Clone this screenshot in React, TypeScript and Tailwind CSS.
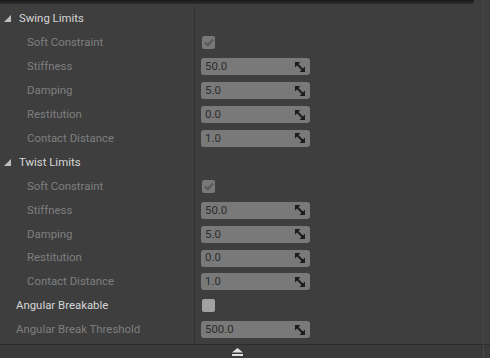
import React from "react";

type Row =
  | { kind: "header"; label: string }
  | { kind: "check"; label: string; indent: number; bright?: boolean; checked: boolean }
  | { kind: "num"; label: string; indent: number; value: string };

const group = (title: string): Row[] => [
  { kind: "header", label: title },
  { kind: "check", label: "Soft Constraint", indent: 27, checked: true },
  { kind: "num", label: "Stiffness", indent: 27, value: "50.0" },
  { kind: "num", label: "Damping", indent: 27, value: "5.0" },
  { kind: "num", label: "Restitution", indent: 27, value: "0.0" },
  { kind: "num", label: "Contact Distance", indent: 27, value: "1.0" },
];

const rows: Row[] = [
  ...group("Swing Limits"),
  ...group("Twist Limits"),
  { kind: "check", label: "Angular Breakable", indent: 16, bright: true, checked: false },
  { kind: "num", label: "Angular Break Threshold", indent: 16, value: "500.0" },
];

const DragIcon = () => (
  <svg width="10" height="10" viewBox="0 0 10 10" className="shrink-0">
    <polygon points="0,0 5.5,0 0,5.5" fill="#1c1c1c" />
    <polygon points="10,10 4.5,10 10,4.5" fill="#1c1c1c" />
    <line x1="2" y1="2" x2="8" y2="8" stroke="#1c1c1c" strokeWidth="2" />
  </svg>
);

const CheckBox = ({ checked }: { checked: boolean }) =>
  checked ? (
    <div className="w-[13px] h-[13px] rounded-[2px] bg-[#787878] flex items-center justify-center">
      <svg width="10" height="9" viewBox="0 0 10 9">
        <path d="M1 4.5 L3.8 7.2 L9 1.5" fill="none" stroke="#585858" strokeWidth="2.2" />
      </svg>
    </div>
  ) : (
    <div className="w-[13px] h-[13px] rounded-[2px] bg-[#a2a2a2]" />
  );

export default function App() {
  return (
    <div
      className="relative w-[490px] h-[358px] bg-[#3e3e3e] overflow-hidden flex flex-col"
      style={{ fontFamily: "Roboto, 'Open Sans', sans-serif" }}
    >
      {/* dark shadow strip along the top */}
      <div className="absolute left-0 top-0 w-[474px] h-[4px] rounded-br-[3px] bg-gradient-to-b from-[#1a1a1a] to-[#2e2e2e]" />
      {/* right edge line */}
      <div className="absolute top-0 bottom-0 left-[483px] w-px bg-[#474747]" />

      <div className="flex flex-col pt-[7px] flex-1">
        {rows.map((r, i) => (
          <div key={i} className="flex h-[23.92px] items-center text-[11.4px]">
            <div className="w-[195px] h-full flex items-center border-r border-[#2f2f2f]">
              {r.kind === "header" ? (
                <div className="flex items-center pl-[4px] text-[#d6d6d6]">
                  <svg width="7" height="7" viewBox="0 0 7 7" className="mr-[8px]">
                    <polygon points="7,0 7,7 0,7" fill="#bdbdbd" />
                  </svg>
                  {r.label}
                </div>
              ) : (
                <span
                  style={{ paddingLeft: r.indent }}
                  className={r.kind === "check" && r.bright ? "text-[#d6d6d6]" : "text-[#7e7e7e]"}
                >
                  {r.label}
                </span>
              )}
            </div>
            <div className="flex-1 flex items-center pl-[6px]">
              {r.kind === "check" && (
                <div className="pl-px">
                  <CheckBox checked={r.checked} />
                </div>
              )}
              {r.kind === "num" && (
                <div className="w-[109px] h-[17px] rounded-[3px] bg-[#797979] flex items-center justify-between pl-[4px] pr-[5px] text-[#2c2c2c]">
                  <span>{r.value}</span>
                  <DragIcon />
                </div>
              )}
            </div>
          </div>
        ))}
        <div className="w-[195px] flex-1 border-r border-[#2f2f2f]" />
      </div>

      <div className="h-[14px] border-t border-[#2c2c2c] bg-[#3a3a3a] flex items-center pl-[232px]">
        <svg width="11" height="8" viewBox="0 0 11 8">
          <polygon points="5.5,0 11,4.5 0,4.5" fill="#e0e0e0" />
          <rect x="0" y="6" width="11" height="2" fill="#e0e0e0" />
        </svg>
      </div>
    </div>
  );
}
